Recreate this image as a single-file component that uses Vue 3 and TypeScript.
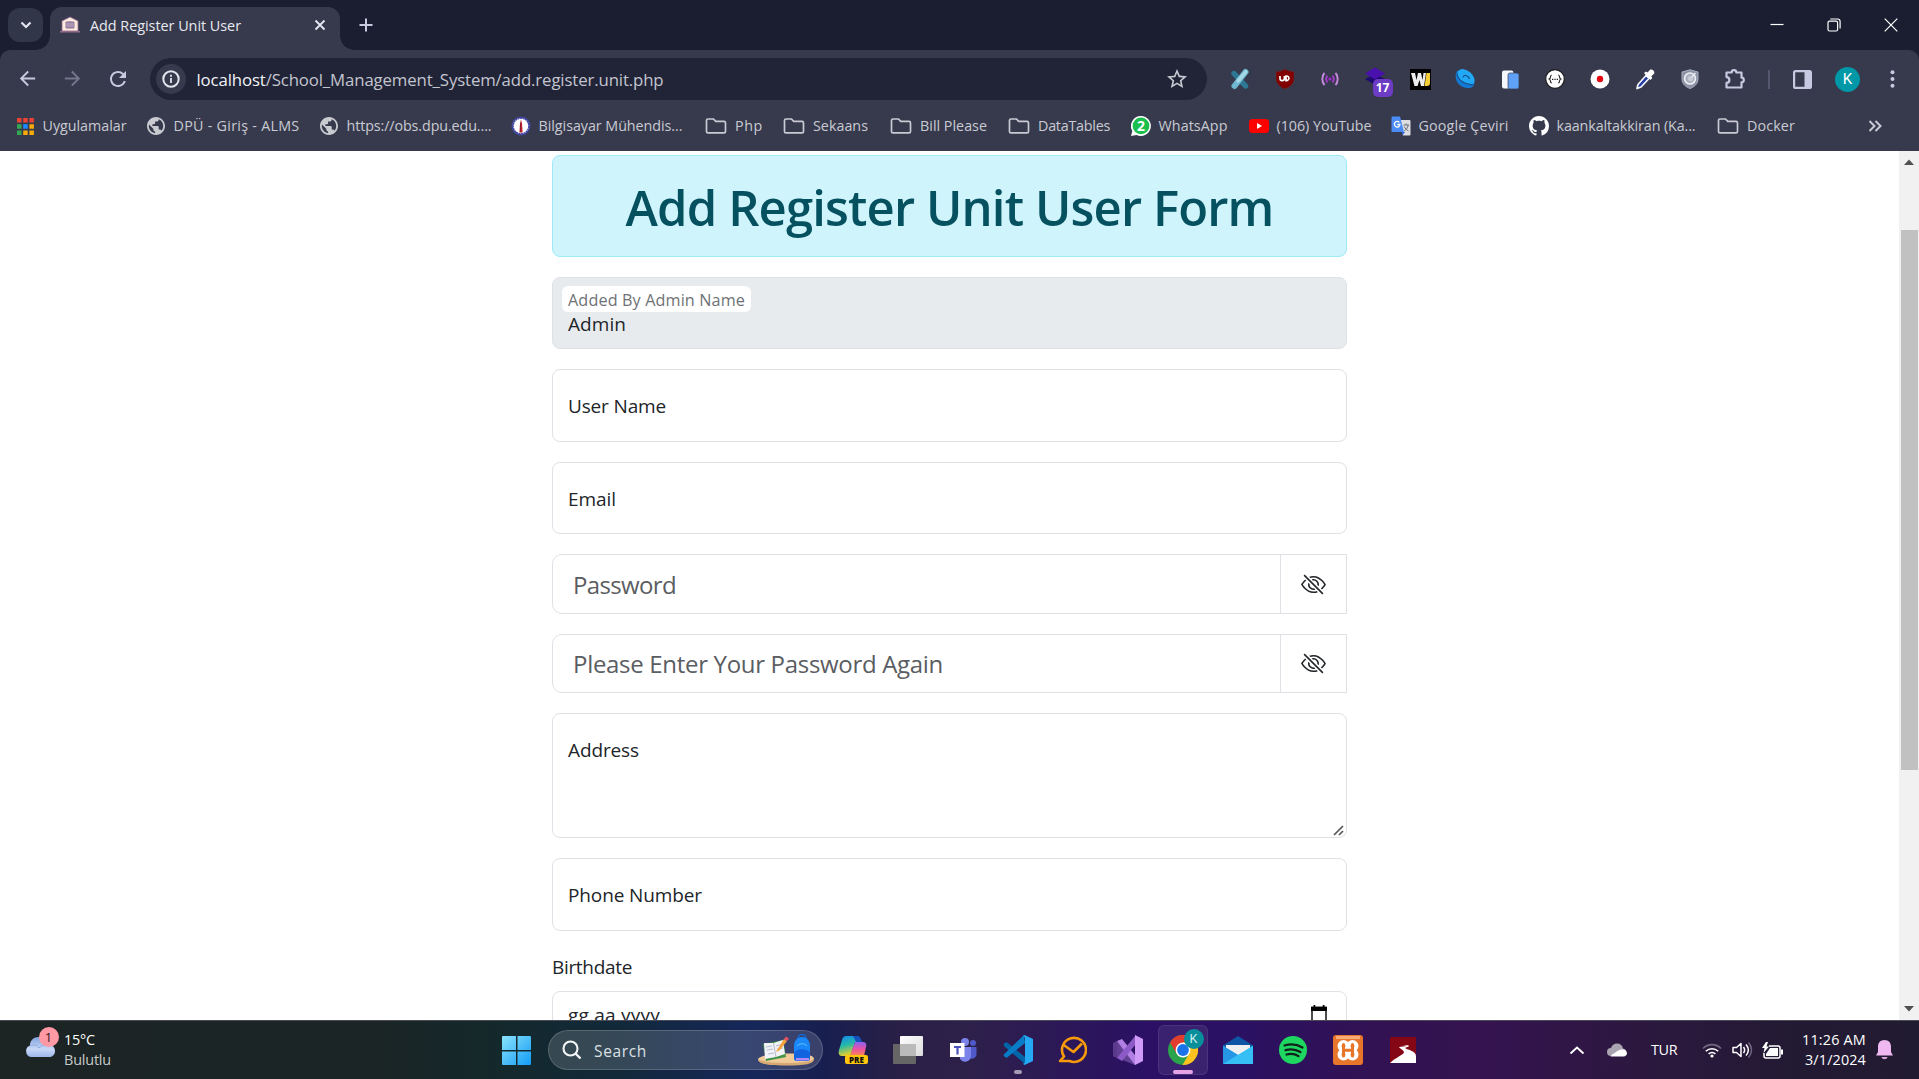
<script setup lang="ts">
import type { Directive } from 'vue'

// Spreads a label over the given width by adjusting its letter spacing.
const vFit: Directive<HTMLElement, number> = {
  mounted(el, { value }) {
    const chars = (el.textContent ?? '').length
    if (!chars) return
    const natural = el.getBoundingClientRect().width
    el.style.letterSpacing = `${(value - natural) / chars}px`
  },
}

interface Bookmark {
  icon: string
  label: string
  cell: number
  fit: number
}

const bookmarks: Bookmark[] = [
  { icon: 'apps', label: 'Uygulamalar', cell: 131, fit: 84 },
  { icon: 'globe', label: 'DPÜ - Giriş - ALMS', cell: 173, fit: 126 },
  { icon: 'globe', label: 'https://obs.dpu.edu....', cell: 192, fit: 145 },
  { icon: 'dial', label: 'Bilgisayar Mühendis...', cell: 194, fit: 144 },
  { icon: 'folder', label: 'Php', cell: 78, fit: 28 },
  { icon: 'folder', label: 'Sekaans', cell: 107, fit: 55 },
  { icon: 'folder', label: 'Bill Please', cell: 118, fit: 67 },
  { icon: 'folder', label: 'DataTables', cell: 123, fit: 72 },
  { icon: 'whatsapp', label: 'WhatsApp', cell: 118, fit: 69 },
  { icon: 'youtube', label: '(106) YouTube', cell: 142, fit: 95 },
  { icon: 'translate', label: 'Google Çeviri', cell: 138, fit: 90 },
  { icon: 'github', label: 'kaankaltakkiran (Ka...', cell: 188, fit: 139 },
  { icon: 'folder', label: 'Docker', cell: 100, fit: 48 },
]
</script>

<template>
  <div class="screen">
    <header class="tabstrip">
      <div class="tabsearch">
        <svg width="12" height="8" viewBox="0 0 12 8"><path d="M1.5 1.5 6 6l4.5-4.5" fill="none" stroke="#e3e5f0" stroke-width="2.2" /></svg>
      </div>
      <div class="tab">
        <svg class="favicon" width="20" height="18" viewBox="0 0 20 18">
          <path d="M2 5 10 1l8 4v10H2z" fill="#ffeadd" stroke="#8d6a93" stroke-width=".8" />
          <path d="M6 6h8v6H6z" fill="#cdb8c9" stroke="#6e5589" stroke-width=".8" />
          <path d="M8 6v6M10 5v7M12 6v6" stroke="#6e5589" stroke-width=".7" />
          <path d="M0 15.8h20" stroke="#9b6f8e" stroke-width="1.4" />
        </svg>
        <span v-fit="151" class="tabtitle">Add Register Unit User</span>
        <svg class="tabclose" width="12" height="12" viewBox="0 0 12 12"><path d="m1.5 1.5 9 9m0-9-9 9" stroke="#e3e5f0" stroke-width="1.9" /></svg>
      </div>
      <svg class="newtab" width="14" height="14" viewBox="0 0 14 14"><path d="M7 .5v13M.5 7h13" stroke="#c8cbe0" stroke-width="2" /></svg>
      <div class="wincontrols">
        <svg width="14" height="14" viewBox="0 0 14 14"><path d="M.5 6.5h13" stroke="#fff" stroke-width="1.2" /></svg>
        <svg width="14" height="14" viewBox="0 0 14 14" fill="none" stroke="#fff" stroke-width="1.2"><rect x="1" y="3.2" width="9.6" height="9.8" rx="1.5" /><path d="M3.3 1h7.2a2.6 2.6 0 0 1 2.6 2.6v7" /></svg>
        <svg width="14" height="14" viewBox="0 0 14 14"><path d="m.7.7 12.6 12.6m0-12.6L.7 13.3" stroke="#fff" stroke-width="1.2" /></svg>
      </div>
    </header>

    <div class="chrome">
      <div class="toolbar">
        <div class="nav">
          <svg width="23" height="23" viewBox="0 0 24 24" fill="#c6c9e0"><path d="M20 11H7.83l5.59-5.59L12 4l-8 8 8 8 1.41-1.41L7.83 13H20z" /></svg>
          <svg width="23" height="23" viewBox="0 0 24 24" fill="#74778c"><path d="m12 4-1.41 1.41L16.17 11H4v2h12.17l-5.58 5.59L12 20l8-8z" /></svg>
          <svg width="24" height="24" viewBox="0 0 24 24" fill="#c6c9e0"><path d="M17.65 6.35A7.96 7.96 0 0 0 12 4c-4.42 0-7.99 3.58-7.99 8s3.57 8 7.99 8c3.73 0 6.84-2.55 7.73-6h-2.08A5.99 5.99 0 0 1 12 18c-3.31 0-6-2.69-6-6s2.69-6 6-6c1.66 0 3.14.69 4.22 1.78L13 11h7V4z" /></svg>
        </div>
        <div class="omnibox">
          <span class="siteinfo">
            <svg width="18" height="18" viewBox="0 0 18 18"><circle cx="9" cy="9" r="7.7" fill="none" stroke="#e3e5ee" stroke-width="2" /><path d="M9 8v5M9 4.8v2" stroke="#e3e5ee" stroke-width="1.8" /></svg>
          </span>
          <span v-fit="467" class="url"><b>localhost</b>/School_Management_System/add.register.unit.php</span>
          <svg class="star" width="24" height="24" viewBox="0 0 24 24" fill="#c9cad2"><path d="m22 9.24-7.19-.62L12 2 9.19 8.63 2 9.24l5.46 4.73L5.82 21 12 17.27 18.18 21l-1.63-7.03zM12 15.4l-3.76 2.27 1-4.28-3.32-2.88 4.38-.38L12 6.1l1.71 4.04 4.38.38-3.32 2.88 1 4.28z" /></svg>
        </div>
        <div class="extensions">
          <span class="ext"><svg width="20" height="22" viewBox="0 0 20 22"><path d="M4 5.5 15.5 18" stroke="#2d7895" stroke-width="5.4" stroke-linecap="round" /><path d="M15.5 4 4.5 18" stroke="#6fb6cf" stroke-width="6" stroke-linecap="round" /><path d="M15.8 3.8 8 13" stroke="#a5d8e6" stroke-width="3.5" stroke-linecap="round" /></svg></span>
          <span class="ext"><svg width="20" height="22" viewBox="0 0 20 22"><path d="M10 1c3 2 6 2.5 9 2.5v7C19 16 15 19 10 21 5 19 1 16 1 10.5v-7C4 3.5 7 3 10 1z" fill="#800000" stroke="#5e3038" stroke-width=".6" /><path d="M5 8v2.5a2.200 2.200 0 0 0 4.400 0V8m1.600 0v4.700h1a2.400 2.400 0 0 0 0-4.700z" fill="none" stroke="#fff" stroke-width="1.700" /></svg></span>
          <span class="ext"><svg width="18" height="14" viewBox="0 0 18 14" fill="none" stroke-width="1.900"><path d="M3.500 1C.6 4 .6 10 3.500 13M14.500 1c2.900 3 2.900 9 0 12" stroke="#c98be0" /><path d="M6.500 3.600c-1.600 2-1.600 4.800 0 6.800M11.500 3.600c1.600 2 1.600 4.800 0 6.800" stroke="#a23bc9" /><circle cx="9" cy="7" r="1.600" fill="#a32ad0" stroke="none" /></svg></span>
          <span class="ext stack"><svg width="22" height="19" viewBox="0 0 22 19"><path d="m1 12 10-5 10 5-10 6z" fill="#1f0a72" /><path d="m1 6.500 10-6 10 6-10 6z" fill="#4a10ad" /></svg><i class="count">17</i></span>
          <span class="ext"><svg width="21" height="21" viewBox="0 0 21 21"><path d="M0 0h21v21H0z" fill="#000" /><path d="M1 4h4l1.500 7L8 4h3l1.500 7L13.500 4h2.500l-2 13h-3L9.500 11 7.500 17h-3z" fill="#ececec" /><path d="M14.500 17 16.500 4H20v10a3 3 0 0 1-3 3z" fill="#f5cd36" /></svg></span>
          <span class="ext"><svg width="20" height="20" viewBox="0 0 20 20"><path d="M2.500 1.500C-2 8 2 18 12 19c5 .5 7.500-2 7.500-6z" fill="#1379d2" /><ellipse cx="11" cy="8" rx="9.800" ry="6.300" transform="rotate(40 11 8)" fill="#22a9f6" /><path d="M2 4.500C3 11 10 16.500 18 15.500M8 8.500c0-3 5-3 6.500 1.500" fill="none" stroke="#154b86" stroke-width="1.100" /></svg></span>
          <span class="ext"><svg width="17" height="19" viewBox="0 0 17 19"><rect width="11.500" height="18" rx="2" y=".5" fill="#f4f7fc" /><rect x="6" y="3" width="11" height="16" rx="2" fill="#5fa1f7" stroke="#373a4d" stroke-width=".7" /></svg></span>
          <span class="ext"><svg width="20" height="20" viewBox="0 0 20 20"><circle cx="10" cy="10" r="9.300" fill="#fff" stroke="#1c1c1c" stroke-width="1.200" /><path d="M6.800 6c-2.300.2-.4 3.200-2.600 4 2.200.8.3 3.800 2.600 4m6.400-8c2.300.2.4 3.200 2.600 4-2.200.8-.3 3.800-2.600 4" fill="none" stroke="#222" stroke-width="1.100" /><path d="M7 10.300h6" stroke="#222" stroke-width="1.200" stroke-dasharray="1.300 1.050" /></svg></span>
          <span class="ext"><svg width="20" height="20" viewBox="0 0 20 20"><circle cx="10" cy="10" r="9.500" fill="#fff" /><circle cx="10" cy="10" r="3.200" fill="#e30613" /></svg></span>
          <span class="ext"><svg width="20" height="21" viewBox="0 0 20 21"><path d="m3 15.500 8-9 3 3-8 8.500-4 1.500z" fill="#1f3aa5" stroke="#f5f6fb" stroke-width="1.700" stroke-linejoin="round" /><path d="m9 4 2-1.500 1.500 1L15 .8c2-1.500 5.500 1.500 4 4l-2.700 2.400 1 1.700L15.500 11z" fill="#fff" /></svg></span>
          <span class="ext"><svg width="18" height="20" viewBox="0 0 18 20"><path d="M9 .8 17 3v7c0 5-4 8-8 9.500C5 18 1 15 1 10V3z" fill="#8a92a4" stroke="#a8afbd" stroke-width="1" /><circle cx="9" cy="9.500" r="5.500" fill="#aab1be" stroke="#eceef3" stroke-width="1.600" /><circle cx="9.500" cy="9.500" r="2.600" fill="#c8ccd5" /><path d="m11 8 3.500-4" stroke="#eceef3" stroke-width="1.300" /></svg></span>
          <span class="ext"><svg width="22" height="22" viewBox="0 0 22 22"><path d="M2.500 4.500h5.200a2.300 2.300 0 0 1 4.600 0h5.200v5.200a2.300 2.300 0 0 1 0 4.600v5.200h-15v-4.600a2.900 2.900 0 0 0 0-5.800z" fill="none" stroke="#c6c9e0" stroke-width="2.200" stroke-linejoin="round" /></svg></span>
        </div>
        <span class="divider"></span>
        <svg class="panel" width="19" height="19" viewBox="0 0 19 19"><rect x="1.100" y="1.100" width="16.800" height="16.800" rx="1.500" fill="none" stroke="#c6c9e0" stroke-width="2.200" /><path d="M11.500 1h6.500v17h-6.500z" fill="#c6c9e0" /></svg>
        <span class="avatar">K</span>
        <svg class="more" width="5" height="18" viewBox="0 0 5 18" fill="#c6c9e0"><circle cx="2.500" cy="2.200" r="2" /><circle cx="2.500" cy="9" r="2" /><circle cx="2.500" cy="15.800" r="2" /></svg>
      </div>

      <nav class="bookmarks">
        <div v-for="b in bookmarks" :key="b.label" class="bookmark" :class="{ dir: b.icon === 'folder' }" :style="{ width: b.cell + 'px' }">
          <span class="bicon">
            <svg v-if="b.icon === 'apps'" width="17" height="17" viewBox="0 0 17 17"><path d="M0 0h4.500v4.500H0zM6.200 0h4.500v4.500H6.200zM12.400 0h4.500v4.500h-4.500z" fill="#ea4335" /><path d="M0 6.200h4.500v4.500H0zM0 12.400h4.500v4.500H0z" fill="#34a853" /><path d="M6.200 6.200h4.500v4.500H6.200z" fill="#1a8cff" /><path d="M12.400 6.200h4.500v4.500h-4.500zM6.200 12.400h4.500v4.500H6.200zM12.400 12.400h4.500v4.500h-4.500z" fill="#fbab05" /></svg>
            <svg v-else-if="b.icon === 'globe'" width="18" height="18" viewBox="2 2 20 20" fill="#c9cbd0"><path d="M12 2C6.480 2 2 6.480 2 12s4.480 10 10 10 10-4.480 10-10S17.520 2 12 2zm-1 17.930c-3.950-.49-7-3.850-7-7.930 0-.62.080-1.210.210-1.790L9 15v1c0 1.100.9 2 2 2zm6.900-2.540c-.26-.81-1-1.390-1.900-1.390h-1v-3c0-.55-.45-1-1-1H8v-2h2c.55 0 1-.45 1-1V7h2c1.100 0 2-.9 2-2v-.41c2.930 1.190 5 4.060 5 7.410 0 2.080-.8 3.970-2.100 5.390z" /></svg>
            <svg v-else-if="b.icon === 'dial'" width="20" height="20" viewBox="0 0 20 20"><circle cx="10" cy="10" r="8.300" fill="#fff" stroke="#4548a8" stroke-width="2.400" stroke-dasharray="2.200 .5" /><path d="m10 3.500 1 4 .6 9H8.400l.6-9z" fill="#c4202f" /><path d="M9.500 7v9" stroke="#712034" stroke-width=".7" /></svg>
            <svg v-else-if="b.icon === 'folder'" width="22" height="16" viewBox="0 0 22 16"><path d="M3 1h5.500l2.200 2.400H19a1.500 1.500 0 0 1 1.500 1.500v8.500a1.500 1.500 0 0 1-1.500 1.500H3a1.500 1.500 0 0 1-1.500-1.500v-11A1.500 1.500 0 0 1 3 1z" fill="none" stroke="#c9cad4" stroke-width="1.700" /></svg>
            <svg v-else-if="b.icon === 'whatsapp'" width="20" height="20" viewBox="0 0 20 20"><path d="M10 0a10 10 0 1 1-4.500 19L0 20l1.300-5A10 10 0 0 1 10 0z" fill="#fff" /><circle cx="10" cy="9.900" r="8.400" fill="#1bbf4e" /><text x="10" y="15.200" text-anchor="middle" class="wa">2</text></svg>
            <svg v-else-if="b.icon === 'youtube'" width="20" height="14" viewBox="0 0 20 14"><rect width="20" height="14" rx="3.500" fill="#f00" /><path d="m8 4 5 3-5 3z" fill="#fff" /></svg>
            <svg v-else-if="b.icon === 'translate'" width="20" height="20" viewBox="0 0 20 20"><path d="M9 4h9.500a1 1 0 0 1 1 1v13.500a1 1 0 0 1-1 1H12z" fill="#dcdee2" /><path d="M12.500 9h5.500M15.200 7.500V9m2 0c-.5 3-2.200 5-4 6m0-4.500c1 2 2.500 3.500 4.300 4.500" stroke="#687078" fill="none" /><path d="M1.500.5h7.500L13 16H1.500a1 1 0 0 1-1-1V1.500a1 1 0 0 1 1-1z" fill="#4a8bf5" /><path d="M11 16h3l-2.500 3.500z" fill="#3367d6" /><path d="M8.300 6.400A2.800 2.800 0 1 0 9 8.500H6.300" fill="none" stroke="#fff" stroke-width="1.300" /></svg>
            <svg v-else width="20" height="20" viewBox="0 0 16 16" fill="#fff"><path d="M8 0C3.580 0 0 3.580 0 8c0 3.540 2.290 6.530 5.470 7.590.4.070.55-.17.55-.38 0-.19-.01-.82-.01-1.490-2.010.370-2.530-.49-2.690-.94-.09-.23-.48-.94-.82-1.130-.28-.15-.68-.52-.01-.53.63-.01 1.080.58 1.230.82.72 1.210 1.870.87 2.330.66.070-.52.280-.87.510-1.070-1.780-.2-3.640-.89-3.640-3.950 0-.87.310-1.590.82-2.150-.08-.2-.36-1.020.080-2.120 0 0 .67-.21 2.200.82.64-.18 1.320-.27 2-.27s1.360.090 2 .270c1.530-1.040 2.200-.82 2.200-.82.440 1.100.160 1.920.080 2.120.510.560.820 1.270.820 2.150 0 3.070-1.870 3.750-3.650 3.950.290.250.540.730.540 1.480 0 1.070-.01 1.930-.01 2.200 0 .210.150.460.550.380A8.010 8.010 0 0 0 16 8c0-4.420-3.580-8-8-8z" /></svg>
          </span>
          <span v-fit="b.fit" class="blabel">{{ b.label }}</span>
        </div>
        <svg class="overflow" width="14" height="12" viewBox="0 0 14 12"><path d="m1.500 1 5 5-5 5M7.500 1l5 5-5 5" fill="none" stroke="#c9cad4" stroke-width="2" /></svg>
      </nav>
    </div>

    <div class="viewport">
      <main class="page">
        <form class="form">
          <div class="alert"><h1 v-fit="648">Add Register Unit User Form</h1></div>
          <div class="field disabled">
            <span class="caption"><span v-fit="177">Added By Admin Name</span></span>
            <span v-fit="58" class="value">Admin</span>
          </div>
          <div class="field"><span v-fit="98">User Name</span></div>
          <div class="field"><span v-fit="48">Email</span></div>
          <div class="group">
            <div class="secret"><span v-fit="103">Password</span></div>
            <div class="toggle">
              <svg width="25" height="25" viewBox="0 0 16 16" fill="#212529"><path d="M13.359 11.238C15.060 9.720 16 8 16 8s-3-5.500-8-5.500a7 7 0 0 0-2.790.588l.77.771A6 6 0 0 1 8 3.500c2.120 0 3.879 1.168 5.168 2.457A13 13 0 0 1 14.828 8q-.086.13-.195.288c-.335.48-.83 1.120-1.465 1.755q-.247.248-.517.486z" /><path d="M11.297 9.176a3.500 3.500 0 0 0-4.474-4.474l.823.823a2.500 2.500 0 0 1 2.829 2.829zm-2.943 1.299.822.822a3.500 3.500 0 0 1-4.474-4.474l.823.823a2.500 2.500 0 0 0 2.829 2.829" /><path d="M3.350 5.470q-.27.24-.518.487A13 13 0 0 0 1.172 8l.195.288c.335.48.83 1.120 1.465 1.755C4.121 11.332 5.881 12.500 8 12.500c.716 0 1.390-.133 2.020-.36l.77.772A7 7 0 0 1 8 13.500C3 13.500 0 8 0 8s.939-1.721 2.641-3.238l.708.709zm10.296 8.884-12-12 .708-.708 12 12z" /></svg>
            </div>
          </div>
          <div class="group repeat">
            <div class="secret"><span v-fit="370">Please Enter Your Password Again</span></div>
            <div class="toggle">
              <svg width="25" height="25" viewBox="0 0 16 16" fill="#212529"><path d="M13.359 11.238C15.060 9.720 16 8 16 8s-3-5.500-8-5.500a7 7 0 0 0-2.790.588l.77.771A6 6 0 0 1 8 3.500c2.120 0 3.879 1.168 5.168 2.457A13 13 0 0 1 14.828 8q-.086.13-.195.288c-.335.48-.83 1.120-1.465 1.755q-.247.248-.517.486z" /><path d="M11.297 9.176a3.500 3.500 0 0 0-4.474-4.474l.823.823a2.500 2.500 0 0 1 2.829 2.829zm-2.943 1.299.822.822a3.500 3.500 0 0 1-4.474-4.474l.823.823a2.500 2.500 0 0 0 2.829 2.829" /><path d="M3.350 5.470q-.27.24-.518.487A13 13 0 0 0 1.172 8l.195.288c.335.48.83 1.120 1.465 1.755C4.121 11.332 5.881 12.500 8 12.500c.716 0 1.390-.133 2.020-.36l.77.772A7 7 0 0 1 8 13.500C3 13.500 0 8 0 8s.939-1.721 2.641-3.238l.708.709zm10.296 8.884-12-12 .708-.708 12 12z" /></svg>
            </div>
          </div>
          <div class="field area">
            <span v-fit="71">Address</span>
            <svg class="grip" width="11" height="11" viewBox="0 0 11 11"><path d="m1 10 9-9M6 10l4-4" stroke="#555" stroke-width="1.700" /></svg>
          </div>
          <div class="field"><span v-fit="134">Phone Number</span></div>
          <div class="label"><span v-fit="80">Birthdate</span></div>
          <div class="field date">
            <span v-fit="92">gg.aa.yyyy</span>
            <svg class="calendar" width="16" height="20" viewBox="0 0 16 20"><path d="M1 2.500h14V18H1z" fill="none" stroke="#000" stroke-width="1.400" /><path d="M0 1.800h2.500V0h1.800v1.800h7.400V0h1.800v1.800H16V6H0z" /></svg>
          </div>
        </form>
      </main>
      <div class="scrollbar">
        <svg width="10" height="6" viewBox="0 0 10 6"><path d="M0 6 5 .5 10 6z" fill="#505050" /></svg>
        <div class="track"><div class="thumb"></div></div>
        <svg width="10" height="6" viewBox="0 0 10 6"><path d="m0 0 5 5.500L10 0z" fill="#505050" /></svg>
      </div>
    </div>

    <footer class="taskbar">
      <div class="weather">
        <div class="cloud">
          <svg width="30" height="22" viewBox="0 0 30 22">
            <defs><linearGradient id="cl" x2="0" y2="1"><stop stop-color="#7fa3e0" /><stop offset=".6" stop-color="#c8d8f7" /><stop offset="1" stop-color="#9db8ea" /></linearGradient></defs>
            <path d="M6 21a6 6 0 0 1-1-11.500C5 4 9 1 13.500 1c5 0 8 3.500 8.500 7.500 4.500-.5 8 2 8 6.500 0 4-3 6-6 6z" fill="url(#cl)" />
            <path d="M5 10c4-2 7-1 9 2 3-3 6-4 9-3" fill="none" stroke="#8eabe2" stroke-width="1" />
          </svg>
          <i class="alertcount">1</i>
        </div>
        <div class="wtext"><span v-fit="31">15°C</span><span v-fit="47" class="dim">Bulutlu</span></div>
      </div>

      <svg class="start" width="30" height="30" viewBox="0 0 30 30">
        <defs><linearGradient id="win" x2="1" y2="1"><stop stop-color="#8be2fc" /><stop offset="1" stop-color="#129cf5" /></linearGradient></defs>
        <path d="M1 0h13v14H0V1a1 1 0 0 1 1-1zm14.500 0h12.500a1 1 0 0 1 1 1v13H15.500zM0 15.500h14v13.500H1a1 1 0 0 1-1-1zm15.500 0h13.500v12.500a1 1 0 0 1-1 1H15.500z" fill="url(#win)" />
      </svg>

      <div class="search">
        <svg width="20" height="20" viewBox="0 0 20 20"><circle cx="8.500" cy="8.500" r="7" fill="none" stroke="#f3f5f6" stroke-width="2.100" /><path d="m13.500 13.500 5 5" stroke="#f3f5f6" stroke-width="2.400" /></svg>
        <span v-fit="53">Search</span>
        <svg class="art" width="58" height="32" viewBox="0 0 58 32">
          <path d="M1 25c3-4 18-6 28-5.500C44 19 55 20 57 24c0 5-9 6.500-28 6.500S1 30 1 25z" fill="#f0cb9a" />
          <path d="M1 25c4 3 16 4 28 4s24-1 28-4c0 5-9 6.500-28 6.500S1 30 1 25z" fill="#d7a972" />
          <path d="m6 10 20-4 3 17-20 4z" fill="#3f9445" />
          <path d="m7 9 9.500 0L26 6l2 14-9 3-11 2z" fill="#f1f2f8" />
          <path d="m16.500 9 2.500 14M9 13l6-1M10 16l6-1m-5 5 6-1m2-7 6-1.500M20 15l6-1" stroke="#a7abc1" stroke-width=".8" fill="none" />
          <path d="m20 16 7-11 3 2-7 9-4 2z" fill="#f3a43c" /><path d="m27 5 2-2.500 3 2.200L30 7z" fill="#e84f62" />
          <path d="M41 5c0-6 8-6 8 0" fill="none" stroke="#1765c9" stroke-width="1.500" />
          <path d="M37 12c0-5 3-9 8-9s8 4 8 9v11c0 3-1 4-4 4h-8c-3 0-4-1-4-4z" fill="#1a87f8" />
          <path d="M37 19c2-5 14-5 16 0v4c0 3-1 4-4 4h-8c-3 0-4-1-4-4z" fill="#1064df" />
          <path d="M39 24h13v2.500H39z" fill="#b189f5" /><path d="M40 12c2-3 8-3 10 0" stroke="#62c0fc" fill="none" />
        </svg>
      </div>

      <div class="apps">
        <span class="app">
          <svg width="30" height="30" viewBox="0 0 30 30">
            <defs>
              <linearGradient id="cpa" x2=".3" y2="1"><stop stop-color="#1487f5" /><stop offset=".5" stop-color="#25b9a8" /><stop offset="1" stop-color="#f1cf27" /></linearGradient>
              <linearGradient id="cpb" x2="0" y2="1"><stop stop-color="#8c62f0" /><stop offset=".5" stop-color="#ea51a4" /><stop offset="1" stop-color="#fb8b4a" /></linearGradient>
            </defs>
            <path d="M8 1h10c3 0 4 2 5 6h-6l-4 12c-1 3-3 2-8 2-4 0-5-2-4-6L4 5c1-3 2-4 4-4z" fill="url(#cpa)" />
            <path d="m17 7 7 0c4 0 5 2 4 5l-2 9H12z" fill="url(#cpb)" /><path d="M15 1h4c3 0 4 3 5 6h-6z" fill="#1652bd" />
            <rect x="7" y="20" width="23" height="9" rx="2" fill="#ffc60b" />
            <text x="18.500" y="27.500" text-anchor="middle" class="pre">PRE</text>
          </svg>
        </span>
        <span class="app">
          <svg width="30" height="28" viewBox="0 0 30 28"><defs><linearGradient id="tv" x2="1" y2="1"><stop stop-color="#fff" /><stop offset="1" stop-color="#dcdcdc" /></linearGradient></defs><rect y="8" width="23" height="20" rx="1" fill="#666" /><rect x="7" width="23" height="20" rx="1" fill="url(#tv)" /><path d="M7 8h16v12H7z" fill="#bababa" /></svg>
        </span>
        <span class="app">
          <svg width="28" height="26" viewBox="0 0 28 26"><circle cx="16" cy="5" r="4" fill="#7b83eb" /><circle cx="24" cy="6" r="3" fill="#5059c9" /><path d="M20 10h7.500v8a5 5 0 0 1-7.500 3z" fill="#5059c9" /><path d="M11 10h11v9a6 6 0 0 1-11 3z" fill="#7b83eb" /><path d="M1 6h14.500v14H1z" fill="#fff" /><path d="M5 9h7v2H9.600v6.500H7.400V11H5z" fill="#4b53bc" /></svg>
        </span>
        <span class="app">
          <svg width="30" height="30" viewBox="0 0 30 30"><path d="M1 8.500 3.500 7 22 22l0 7L.8 11z" fill="#0065a9" /><path d="M.8 19.500 21 0l1 8L3.500 23 .8 21z" fill="#087cc7" /><path d="M21.500 0 30 4v22l-8.500 4-2-1.500c1.500.5 2.500-.5 2.500-2V3.500C22 2 21 1 20 1.300z" fill="#25a9f2" /></svg>
          <i class="dot"></i>
        </span>
        <span class="app">
          <svg width="29" height="28" viewBox="0 0 29 28" fill="none" stroke="#f79a0c" stroke-width="2.600" stroke-linejoin="round"><path d="M6 20.500A12 12 0 1 1 11.500 25H2z" /><path d="M5 8.500 15.500 16 24 7.500" /></svg>
        </span>
        <span class="app">
          <svg width="30" height="30" viewBox="0 0 30 30"><path d="m0 8 4-2 18 17v7L2 22l-2-1z" fill="#624094" /><path d="M4 6 9 4l17 21-4 5z" fill="#b17fe4" /><path d="M0 8.500 4 6v17l-4-2z" fill="#5b3a8d" /><path d="m4 23 5 3L23 9V0z" fill="#8d5bc7" /><path d="m22 0 8 4v22l-8 4z" fill="#d09bf8" /></svg>
        </span>
        <span class="app active">
          <svg width="30" height="30" viewBox="0 0 30 30"><circle cx="15" cy="15" r="15" fill="#2ba24c" /><path d="M2 7.500A15 15 0 0 1 28 7.500L15 9l-6.500 9.500z" fill="#e33b2e" /><path d="M28 7.500A15 15 0 0 1 14.500 30L21.500 18 20 8z" fill="#fcc31e" /><path d="M15 7.500h13L22 18z" fill="#fcc31e" /><circle cx="15" cy="15" r="7.400" fill="#fff" /><circle cx="15" cy="15" r="5.900" fill="#1a73e8" /></svg>
          <i class="profile">K</i>
          <i class="bar"></i>
        </span>
        <span class="app">
          <svg width="30" height="28" viewBox="0 0 30 28"><path d="M0 9.500 15 0l15 9.500v4H0z" fill="#0d56a5" /><path d="M3 9h24v10H3z" fill="#f2f3f4" /><path d="M0 9.500 30 28H0z" fill="#2796e4" /><path d="M30 9.500V28H0z" fill="#36bff4" /><path d="M3 11.300V9h24v2.300L15 18.500z" fill="#eef0f2" /></svg>
        </span>
        <span class="app">
          <svg width="28" height="28" viewBox="0 0 28 28"><circle cx="14" cy="14" r="14" fill="#1ed760" /><path d="M5.500 9.500c6-2 13-1 18 2M6.500 14.200c5-1.600 10.500-.8 15 1.800M7.500 18.500c4-1.200 8.500-.7 12 1.600" fill="none" stroke="#10231a" stroke-width="2.300" stroke-linecap="round" /></svg>
        </span>
        <span class="app">
          <svg width="30" height="30" viewBox="0 0 30 30"><rect width="30" height="30" rx="3" fill="#e8762a" /><path d="M3 1h24v3H3z" fill="#f6ab78" /><g fill="none" stroke="#fff" stroke-width="4"><circle cx="10.500" cy="11" r="4" /><circle cx="19.500" cy="11" r="4" /><circle cx="10.500" cy="19.500" r="4" /><circle cx="19.500" cy="19.500" r="4" /></g><path d="M10.500 9.500V21M19.500 9.500V21M10.500 15.200h9" fill="none" stroke="#e8762a" stroke-width="3" stroke-linecap="round" /></svg>
        </span>
        <span class="app">
          <svg width="26" height="26" viewBox="0 0 26 26"><path d="M0 0h26v26H0z" fill="#850716" /><path d="m9 10 8-1-4-1 5 .3c3 1.200-2 2-3 2.700 3 2 11 3 11 8v7H0c5-5 13-8 14-10.500C14 13 10 12 9 10z" fill="#fff" /></svg>
        </span>
      </div>

      <div class="tray">
        <svg class="t1" width="16" height="9" viewBox="0 0 16 9"><path d="m1.500 7.500 6.500-6 6.500 6" fill="none" stroke="#fff" stroke-width="1.900" /></svg>
        <svg class="t2" width="21" height="14" viewBox="0 0 21 14"><path d="M4 13a4 4 0 0 1 0-8c1-3 3-4.500 6-4.500 3.500 0 5.500 2 6 5a3.800 3.800 0 0 1 0 7.500z" fill="#aaa4b2" /><path d="M3.500 13.500c2-3 5-4 8-6 2-1.500 4-1 5-1 4 .5 5 6 .5 7z" fill="#fff" /></svg>
        <span v-fit="28" class="lang">TUR</span>
        <svg class="t3" width="20" height="15" viewBox="0 0 20 15" fill="none" stroke-width="1.600"><path d="M1 5.500a12.500 12.500 0 0 1 18 0" stroke="#716680" /><path d="M3.800 8.300a8.800 8.800 0 0 1 12.400 0M6.600 11a4.900 4.900 0 0 1 6.800 0" stroke="#fff" /><circle cx="10" cy="13" r="1.600" fill="#fff" /></svg>
        <svg class="t4" width="21" height="18" viewBox="0 0 21 18" fill="none" stroke="#fff" stroke-width="1.500"><path d="M1 6.500h3.500L9 2.500v13l-4.500-4H1z" stroke-linejoin="round" /><path d="M11.500 6c1.500 2 1.500 4 0 6M14 3.500c3 3.500 3 7.500 0 11" /><path d="M16.500 1.500c4 4.500 4 10.500 0 15" stroke="#716680" /></svg>
        <svg class="t5" width="21" height="17" viewBox="0 0 21 17"><path d="M7 4h9a2 2 0 0 1 2 2v8a2 2 0 0 1-2 2H4a2 2 0 0 1-2-2v-3" fill="none" stroke="#fff" stroke-width="1.500" /><path d="M8 6h8v8H4v-2zM19 7.500h2v5h-2zM4 0 0 6h2.500L1.500 11 7 4.500H4.500L6 0z" fill="#fff" /></svg>
        <div class="clock"><span v-fit="64">11:26 AM</span><span v-fit="61">3/1/2024</span></div>
        <svg class="bell" width="17" height="20" viewBox="0 0 17 20"><path d="M8.500 0c4 0 6.500 2.800 6.500 6.500V12l2 3.500H0L2 12V6.500C2 2.800 4.500 0 8.500 0z" fill="#efb8f0" /><path d="M5.500 17h6c-.5 3-5.500 3-6 0z" fill="#d9a1dc" /></svg>
      </div>
    </footer>
  </div>
</template>

<style>
body {
  overflow: hidden;
}
</style>

<style scoped>
.screen {
  display: flex;
  flex-direction: column;
  width: 1919px;
  height: 1079px;
  overflow: hidden;
  background: #1b1e30;
  font-family: 'Open Sans', 'Noto Sans', sans-serif;
}
.screen * {
  box-sizing: border-box;
}
svg {
  display: block;
  flex: none;
}
i,
b {
  font-style: normal;
  font-weight: 400;
}
span {
  white-space: nowrap;
}

.tabstrip {
  display: flex;
  height: 50px;
  padding-left: 8px;
  flex: none;
}
.tabsearch {
  display: flex;
  align-items: center;
  justify-content: center;
  width: 35px;
  height: 34px;
  margin: 8px 7px 0 0;
  border-radius: 12px;
  background: #323649;
}
.tab {
  position: relative;
  display: flex;
  align-items: center;
  width: 290px;
  height: 43px;
  margin-top: 7px;
  padding: 0 14px 7px 10px;
  border-radius: 12px 12px 0 0;
  background: #373a4d;
}
.tab::before,
.tab::after {
  content: '';
  position: absolute;
  bottom: 0;
  width: 14px;
  height: 14px;
}
.tab::before {
  left: -14px;
  background: radial-gradient(circle at 0 0, transparent 13.5px, #373a4d 14px);
}
.tab::after {
  right: -14px;
  background: radial-gradient(circle at 100% 0, transparent 13.5px, #373a4d 14px);
}
.tabtitle {
  margin-left: 10px;
  color: #e8e9ef;
  font-size: 14.4px;
}
.tabclose {
  margin-left: auto;
}
.newtab {
  margin: 18px 0 0 19px;
}
.wincontrols {
  display: flex;
  gap: 43px;
  margin: 18px 21px 0 auto;
}

.chrome {
  flex: none;
  height: 101px;
  border-radius: 10px 10px 0 0;
  background: #373a4d;
}
.toolbar {
  display: flex;
  align-items: center;
  height: 58px;
}
.nav {
  display: flex;
  gap: 22px;
  width: 150px;
  padding-left: 16px;
}
.omnibox {
  display: flex;
  align-items: center;
  width: 1057px;
  height: 42px;
  padding-left: 6px;
  border-radius: 21px;
  background: #212437;
}
.siteinfo {
  display: flex;
  align-items: center;
  justify-content: center;
  width: 30px;
  height: 30px;
  border-radius: 50%;
  background: #373a4d;
}
.url {
  margin-left: 10.500px;
  color: #c3c5cf;
  font-size: 16.8px;
}
.url b {
  color: #f2f3f7;
}
.star {
  margin: 0 18px 0 auto;
}
.extensions {
  display: flex;
  margin-left: 10.500px;
}
.ext {
  display: flex;
  align-items: center;
  justify-content: center;
  width: 45px;
  height: 30px;
}
.stack {
  position: relative;
  padding-bottom: 6px;
}
.count {
  position: absolute;
  left: 20px;
  top: 15px;
  width: 20px;
  height: 18px;
  border-radius: 5px;
  background: #6c3cc4;
  color: #fff;
  font-size: 12px;
  font-weight: 700;
  line-height: 18px;
  text-align: center;
}
.divider {
  width: 2px;
  height: 19px;
  margin-left: 10.500px;
  background: #54576d;
}
.panel {
  margin-left: 23px;
}
.avatar {
  width: 25px;
  height: 25px;
  margin-left: 23px;
  border-radius: 50%;
  background: #0097a7;
  color: #fff;
  font-family: Roboto, sans-serif;
  font-size: 15px;
  line-height: 25px;
  text-align: center;
}
.more {
  margin-left: 30px;
}

.bookmarks {
  display: flex;
  align-items: center;
  height: 36px;
  padding-left: 15px;
}
.bookmark {
  display: flex;
  align-items: center;
  gap: 7.500px;
  flex: none;
}
.dir {
  gap: 9px;
  padding-left: 1px;
}
.bicon {
  display: flex;
  align-items: center;
  justify-content: center;
  width: 20px;
}
.blabel {
  color: #c9cad2;
  font-size: 14.300px;
  line-height: 20px;
}
.overflow {
  margin-left: 51px;
}
.wa {
  fill: #fff;
  font: 700 14px 'Open Sans', sans-serif;
}

.viewport {
  display: flex;
  flex: none;
  height: 869px;
  overflow: hidden;
  background: #fff;
}
.page {
  width: 1899px;
  padding: 4px 0 0 552px;
}
.form {
  display: flex;
  flex-direction: column;
  gap: 20px;
  width: 795px;
  color: #212529;
  font-size: 19px;
  line-height: 30px;
}
.alert {
  display: flex;
  align-items: center;
  justify-content: center;
  height: 102px;
  padding-top: 2px;
  border: 1px solid #9eeaf9;
  border-radius: 8px;
  background: #cff4fc;
}
h1 {
  margin: 0;
  color: #055160;
  font-size: 49px;
  font-weight: 600;
  line-height: 60px;
  white-space: nowrap;
}
.field {
  display: flex;
  height: 72.500px;
  padding: 21px 15px 0;
  border: 1px solid #dee2e6;
  border-radius: 8px;
}
.disabled {
  flex-direction: column;
  align-items: flex-start;
  height: 72px;
  padding: 8px 9px 0;
  background: #e8ebee;
}
.caption {
  height: 26px;
  padding: 0 6px;
  border-radius: 6px;
  background: #fff;
  color: #6f7276;
  font-size: 16.200px;
  line-height: 28px;
}
.caption span {
  display: inline-block;
}
.value {
  margin: -3px 0 0 6px;
}
.group {
  display: flex;
  height: 60px;
}
.repeat {
  height: 59.300px;
}
.secret {
  display: flex;
  align-items: center;
  width: 729px;
  padding: 1px 0 0 20px;
  border: 1px solid #dee2e6;
  border-radius: 10px 0 0 10px;
  color: #5a5d61;
  font-size: 24px;
}
.toggle {
  display: flex;
  align-items: center;
  justify-content: center;
  width: 67px;
  margin-left: -1px;
  border: 1px solid #dee2e6;
}
.area {
  position: relative;
  height: 125px;
}
.grip {
  position: absolute;
  right: 2px;
  bottom: 1px;
}
.label {
  height: 30px;
  margin-bottom: -10px;
  padding-top: 1px;
}
.date {
  padding: 8px 19px 0 15px;
}
.calendar {
  margin: 5px 0 0 auto;
}

.scrollbar {
  display: flex;
  flex-direction: column;
  align-items: center;
  width: 20px;
  padding: 8px 0 8px;
  background: #f1f1f1;
}
.track {
  flex: 1;
  padding-top: 65px;
}
.thumb {
  width: 17px;
  height: 540px;
  background: #c1c1c1;
}

.taskbar {
  display: flex;
  flex: none;
  height: 59px;
  border-top: 1px solid #4a4b57;
  background: linear-gradient(90deg, #1c2424 0, #1b2526 380px, #14292c 500px, #12293a 620px, #15275a 750px, #181f50 825px, #2a1f46 900px, #2d204a 970px, #2b1065 1150px, #2b1163 1240px, #321253 1370px, #351350 1480px, #2c183f 1640px, #221a33 1800px, #211b31 1919px);
  color: #fff;
  font-size: 14.400px;
  line-height: 20px;
}
.weather {
  display: flex;
  width: 502px;
  padding: 6px 0 0 24.500px;
}
.cloud {
  position: relative;
  width: 30px;
  padding-top: 9px;
}
.alertcount {
  position: absolute;
  left: 14px;
  top: 0;
  width: 20px;
  height: 20px;
  border-radius: 50%;
  background: #ff99a4;
  color: #2a1a1c;
  font-size: 13px;
  text-align: center;
}
.wtext {
  display: flex;
  flex-direction: column;
  align-items: flex-start;
  padding: 3px 0 0 9.500px;
}
.dim {
  color: #c8cbcb;
}
.start {
  margin-top: 15px;
}
.search {
  display: flex;
  align-items: center;
  width: 275px;
  height: 40px;
  margin: 9px 0 0 16px;
  padding-left: 13px;
  border: 1px solid rgba(255, 255, 255, 0.17);
  border-radius: 20px;
  background: rgba(255, 255, 255, 0.15);
  color: #dce1e4;
  font-size: 15.500px;
}
.search span {
  margin: 1px 0 0 12px;
}
.art {
  margin: 0 7px 0 auto;
}
.apps {
  display: flex;
  margin-left: 2px;
}
.app {
  position: relative;
  display: flex;
  align-items: center;
  justify-content: center;
  width: 50px;
  height: 50px;
  margin: 4px 2.500px 0;
}
.active {
  border: 1px solid rgba(255, 255, 255, 0.08);
  border-radius: 6px;
  background: rgba(255, 255, 255, 0.08);
}
.dot,
.bar {
  position: absolute;
  bottom: 1px;
  left: 21px;
  width: 8px;
  height: 4px;
  border-radius: 2px;
  background: #a39bb3;
}
.bar {
  bottom: 0;
  left: 14px;
  width: 20px;
  background: #e5a3e6;
}
.profile {
  position: absolute;
  left: 25px;
  top: 3px;
  width: 20px;
  height: 20px;
  border-radius: 50%;
  background: #078f9c;
  color: #cfeef0;
  font-family: Roboto, sans-serif;
  font-size: 12.500px;
  text-align: center;
}
.pre {
  fill: #111;
  font: 800 8px 'Open Sans', sans-serif;
}
.tray {
  display: flex;
  align-items: center;
  margin-left: auto;
  padding: 0 26px 0 0;
}
.t1 {
  margin-right: 22px;
}
.t2 {
  margin-right: 23px;
}
.lang {
  width: 29px;
  margin-right: 22px;
}
.t3 {
  margin-right: 10px;
}
.t4 {
  margin-right: 9px;
}
.t5 {
  margin-right: 18px;
}
.clock {
  display: flex;
  flex-direction: column;
  align-items: flex-end;
  width: 65px;
}
.bell {
  margin-left: 10px;
}
</style>
